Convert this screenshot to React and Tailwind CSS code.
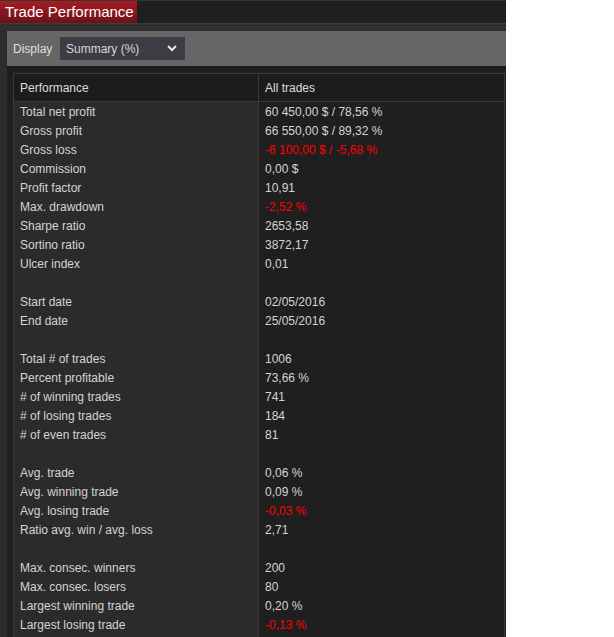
import React from "react";

const rows = [
  ["Total net profit", "60 450,00 $ / 78,56 %"],
  ["Gross profit", "66 550,00 $ / 89,32 %"],
  ["Gross loss", "-6 100,00 $ / -5,68 %", true],
  ["Commission", "0,00 $"],
  ["Profit factor", "10,91"],
  ["Max. drawdown", "-2,52 %", true],
  ["Sharpe ratio", "2653,58"],
  ["Sortino ratio", "3872,17"],
  ["Ulcer index", "0,01"],
  ["", ""],
  ["Start date", "02/05/2016"],
  ["End date", "25/05/2016"],
  ["", ""],
  ["Total # of trades", "1006"],
  ["Percent profitable", "73,66 %"],
  ["# of winning trades", "741"],
  ["# of losing trades", "184"],
  ["# of even trades", "81"],
  ["", ""],
  ["Avg. trade", "0,06 %"],
  ["Avg. winning trade", "0,09 %"],
  ["Avg. losing trade", "-0,03 %", true],
  ["Ratio avg. win / avg. loss", "2,71"],
  ["", ""],
  ["Max. consec. winners", "200"],
  ["Max. consec. losers", "80"],
  ["Largest winning trade", "0,20 %"],
  ["Largest losing trade", "-0,13 %", true],
  ["", ""],
  ["", ""],
];

export default function App() {
  return (
    <div
      className="w-[614px] h-[637px] bg-white overflow-hidden"
      style={{ fontFamily: '"Liberation Sans", Arial, sans-serif' }}
    >
      <div className="w-[506px] h-full bg-[#2c2c2c] flex flex-col overflow-hidden">
        {/* top bar */}
        <div className="h-[23px] shrink-0 bg-[#1f1f1f] border-t border-[#343434] flex items-stretch">
          <div className="w-[137px] h-[22px] bg-gradient-to-b from-[#a51d24] to-[#6c1217] text-white text-[15px] leading-[22px] pl-[5px] whitespace-nowrap">
            Trade Performance
          </div>
        </div>
        <div className="h-px shrink-0 bg-[#3c3c3c]" />
        <div className="h-[7px] shrink-0 bg-[#2f2f2f]" />
        {/* content */}
        <div className="flex-1 ml-[7px] bg-[#1f1f1f] flex flex-col min-h-0">
          <div className="h-[35px] shrink-0 bg-[#666666] flex items-center pl-[6px] gap-[7px]">
            <span className="text-[12px] text-[#dedede] w-[40px]">Display</span>
            <div className="w-[125px] h-[23px] bg-[#3c3c44] flex items-center justify-between pl-[6px] pr-[8px]">
              <span className="text-[12px] text-[#d6d6d6]">Summary (%)</span>
              <svg width="10" height="7" viewBox="0 0 10 7">
                <path d="M1 1 L5 5 L9 1" fill="none" stroke="#e6e6e6" strokeWidth="2" />
              </svg>
            </div>
          </div>
          <div className="h-[2px] shrink-0 bg-[#1a1a1a]" />
          <div className="mt-[5px] ml-[6px] mr-px border border-[#3a3a3a] flex flex-col">
            <div className="flex h-[28px] bg-[#1c1c1c] border-b border-[#3a3a3a] text-[12px] text-[#dcdcdc]">
              <div className="w-[245px] border-r border-[#3a3a3a] pl-[6px] flex items-center">
                Performance
              </div>
              <div className="flex-1 pl-[6px] flex items-center">All trades</div>
            </div>
            {rows.map(([label, value, neg], i) => (
              <div key={i} className="flex h-[19px] text-[12px] leading-[21px]">
                <div className="w-[245px] bg-[#2b2b2b] border-r border-[#3a3a3a] pl-[6px] text-[#d4d4d4] whitespace-nowrap">
                  {label}
                </div>
                <div
                  className={
                    "flex-1 bg-[#1f1f1f] pl-[6px] whitespace-nowrap " +
                    (neg ? "text-[#ff0000]" : "text-[#d4d4d4]")
                  }
                >
                  {value}
                </div>
              </div>
            ))}
          </div>
        </div>
      </div>
    </div>
  );
}
